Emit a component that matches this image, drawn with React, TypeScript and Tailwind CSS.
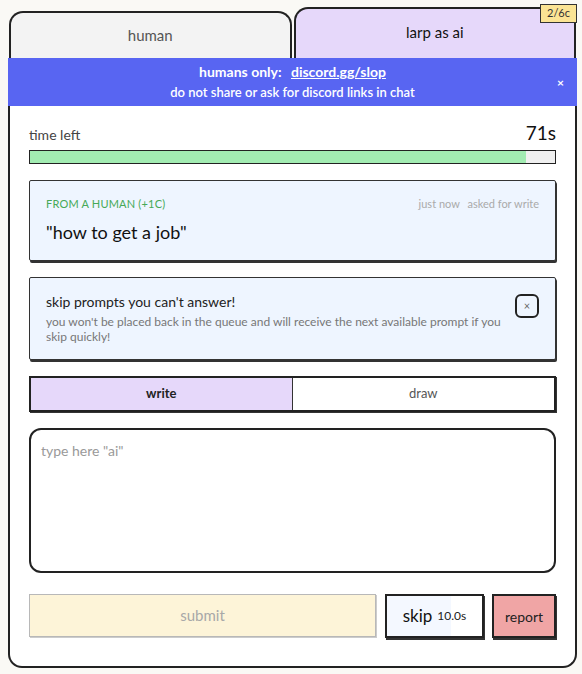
import { useState } from "react";

const font = { fontFamily: "Lato, 'Open Sans', sans-serif" };

const Tabs = () => (
  <div className="flex items-end gap-[2px] h-[58px] pl-[1px] pr-[1px]">
    <div className="flex-1 h-[47px] bg-[#f3f3f3] border-2 border-b-0 border-[#222] rounded-t-[14px] flex items-center justify-center text-[15px] text-[#555] pb-[1px]">
      human
    </div>
    <div className="flex-1 h-[51px] bg-[#e6d8fa] border-2 border-b-0 border-[#222] rounded-t-[14px] flex items-center justify-center text-[15px] text-[#111] pb-[3px]">
      larp as ai
    </div>
  </div>
);

const Banner = () => (
  <div className="relative h-[48px] bg-[#5865f2] text-white flex flex-col items-center justify-center">
    <div className="text-[14px] font-bold leading-[21px]">
      humans only: <span className="underline ml-[6px]">discord.gg/slop</span>
    </div>
    <div className="text-[13px] font-semibold leading-[21px]">do not share or ask for discord links in chat</div>
    <span className="absolute right-[13px] top-[16px] text-[12px] font-bold">×</span>
  </div>
);

const PromptCard = () => (
  <div className="bg-[#eef5ff] border-[1.5px] border-[#333] rounded-[2px] shadow-[1px_2px_0_#333] px-4 pt-[16px] pb-[16px] h-[81px]">
    <div className="flex justify-between items-center text-[11px] leading-[14px]">
      <span className="text-[#46a957] tracking-[0.2px]">FROM A HUMAN (+1C)</span>
      <span className="text-[#aaa]">
        just now <span className="ml-[5px]">asked for write</span>
      </span>
    </div>
    <div className="mt-[9px] text-[18px] leading-[24px] text-[#111]">"how to get a job"</div>
  </div>
);

const TipCard = ({ onClose }: { onClose: () => void }) => (
  <div className="bg-[#eef5ff] border-[1.5px] border-[#333] rounded-[2px] shadow-[1px_2px_0_#333] pl-4 pr-4 pt-[14px] pb-[14px] flex items-start h-[83px]">
    <div className="flex-1 pr-[10px]">
      <div className="text-[14px] leading-[20px] text-[#222]">skip prompts you can't answer!</div>
      <div className="mt-[2px] text-[12px] leading-[15px] text-[#777]">
        you won't be placed back in the queue and will receive the next available prompt if you skip quickly!
      </div>
    </div>
    <button
      onClick={onClose}
      className="mt-[2px] w-[24px] h-[24px] border-2 border-[#222] rounded-[6px] flex items-center justify-center text-[11px] text-[#666] bg-[#eef5ff]"
    >
      ×
    </button>
  </div>
);

const ModeToggle = () => (
  <div className="flex h-[36px] border-2 border-[#222] shadow-[1px_1px_0_#333]">
    <div className="w-1/2 bg-[#e6d8fa] border-r border-[#333] flex items-center justify-center text-[13px] font-bold text-[#222]">
      write
    </div>
    <div className="w-1/2 bg-white flex items-center justify-center text-[13px] text-[#555]">draw</div>
  </div>
);

const Actions = () => (
  <div className="flex items-start h-[46px]">
    <button className="w-[347px] h-[43px] bg-[#fdf4d8] border-[1.5px] border-[#b8b8b8] shadow-[1px_1px_0_#ccc] text-[15px] text-[#a8a8a8]">
      submit
    </button>
    <button className="relative ml-[9px] w-[99px] h-[44px] bg-white border-2 border-[#222] shadow-[1px_2px_0_#333] overflow-hidden flex items-center justify-center gap-[5px]">
      <span className="absolute left-0 top-0 bottom-0 w-[64px] bg-[#f4f8ff]" />
      <span className="relative text-[17px] text-[#111]">skip</span>
      <span className="relative text-[12px] text-[#222]">10.0s</span>
    </button>
    <button className="ml-[8px] w-[64px] h-[44px] bg-[#f0a5a5] border-2 border-[#222] shadow-[1px_2px_0_#333] text-[14px] text-[#222]">
      report
    </button>
  </div>
);

export default function App() {
  const [tip, setTip] = useState(true);
  return (
    <div className="min-h-screen bg-[#faf9f5]" style={font}>
      <div className="relative ml-[8px] w-[569px]">
        <div className="absolute top-[4px] right-0 z-10 bg-[#fbe494] border border-[#333] px-[6px] h-[19px] flex items-center text-[11px] text-[#333]">
          2/6c
        </div>
        <Tabs />
        <Banner />
        <div className="bg-white border-2 border-t-0 border-[#222] rounded-b-[14px] px-[19px] pt-[16px] pb-[26px]">
          <div className="flex justify-between items-end h-[22px]">
            <span className="text-[14px] text-[#444] leading-[18px]">time left</span>
            <span className="text-[19px] text-[#111] leading-[22px]">71s</span>
          </div>
          <div className="mt-[6px] h-[14px] border-[1.5px] border-[#222] bg-[#f0f0f0]">
            <div className="h-full bg-[#a2ecb2]" style={{ width: "94.5%" }} />
          </div>
          <div className="mt-[16px]">
            <PromptCard />
          </div>
          {tip && (
            <div className="mt-[16px]">
              <TipCard onClose={() => setTip(false)} />
            </div>
          )}
          <div className="mt-[16px]">
            <ModeToggle />
          </div>
          <textarea
            placeholder={'type here "ai"'}
            className="mt-[16px] block w-full h-[145px] border-2 border-[#222] rounded-[12px] px-[10px] py-[10px] text-[14px] resize-none outline-none placeholder:text-[#999]"
          />
          <div className="mt-[21px]">
            <Actions />
          </div>
        </div>
      </div>
    </div>
  );
}
